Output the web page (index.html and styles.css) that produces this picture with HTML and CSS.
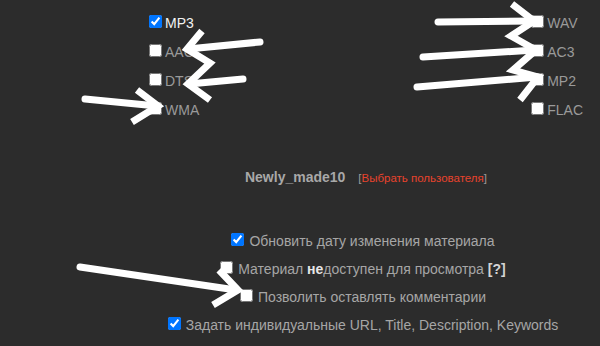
FILE: index.html
```html
<!DOCTYPE html>
<html lang="ru">
<head>
<meta charset="utf-8">
<title>Форматы</title>
<link rel="stylesheet" href="styles.css">
</head>
<body>
<div class="page">
  <div class="formats">
    <div class="col">
      <label class="fmt active"><input type="checkbox" checked>MP3</label>
      <label class="fmt"><input type="checkbox">AAC</label>
      <label class="fmt"><input type="checkbox">DTS</label>
      <label class="fmt"><input type="checkbox">WMA</label>
    </div>
    <div class="col">
      <label class="fmt"><input type="checkbox">WAV</label>
      <label class="fmt"><input type="checkbox">AC3</label>
      <label class="fmt"><input type="checkbox">MP2</label>
      <label class="fmt"><input type="checkbox">FLAC</label>
    </div>
  </div>

  <div class="user">
    <span class="name">Newly_made10</span>
    <span class="pick">[<a class="pick-link">Выбрать пользователя</a>]</span>
  </div>

  <div class="opts">
    <label class="opt"><input type="checkbox" checked>Обновить дату изменения материала</label>
    <label class="opt"><input type="checkbox">Материал <b class="hl">не</b>доступен для просмотра <b class="help">[?]</b></label>
    <label class="opt"><input type="checkbox">Позволить оставлять комментарии</label>
    <label class="opt"><input type="checkbox" checked>Задать индивидуальные URL, Title, Description, Keywords</label>
  </div>

  <svg class="arrows" width="600" height="346" viewBox="0 0 600 346" aria-hidden="true">
    <g fill="none" stroke="#ffffff" stroke-width="7">
      <path d="M260 42 L188 49" stroke-linecap="round"/>
      <path d="M202 31 L187 49 L210 63 L188 84 L210 100" stroke-linejoin="miter" stroke-miterlimit="10"/>
      <path d="M243 79 L189 84" stroke-linecap="round"/>
      <path d="M85 99 L157 106" stroke-linecap="round"/>
      <path d="M137 90 L158 106 L132 122"/>
      <path d="M438 22 L533 21" stroke-linecap="round"/>
      <path d="M512 4 L534 21 L511 36 L536 50 L513 70 L538 77 L520 100"/>
      <path d="M423 57 L535 50" stroke-linecap="round"/>
      <path d="M417 87 L537 77" stroke-linecap="round"/>
      <path d="M80 267 L236 290" stroke-linecap="round"/>
      <path d="M219 270 L238 290 L213 305"/>
    </g>
  </svg>
</div>
</body>
</html>
```

FILE: styles.css
```css
html, body {
  margin: 0;
  padding: 0;
  background: #2c2c2c;
  overflow: hidden;
}

.page {
  position: relative;
  width: 600px;
  height: 346px;
  padding: 9px 0 0 128px;
  box-sizing: border-box;
  font-family: "Liberation Sans", Arial, sans-serif;
  font-size: 14px;
  color: #a3a3a3;
}

.formats {
  width: 438px;
  margin: 0 auto;
  display: flex;
  justify-content: space-between;
}

.col {
  display: flex;
  flex-direction: column;
}

.fmt {
  display: block;
  height: 29px;
  line-height: 29px;
  color: #9a9a9a;
  white-space: nowrap;
}

.fmt.active {
  color: #f2f2f2;
}

.user {
  margin-top: 38px;
  height: 29px;
  line-height: 29px;
  text-align: center;
  white-space: nowrap;
  padding-left: 4px;
}

.name {
  font-weight: bold;
  color: #a8a8a8;
  margin-right: 9px;
}

.pick {
  font-size: 11.5px;
  color: #9a9a9a;
}

.pick-link {
  color: #e8432d;
}

.opts {
  margin-top: 35px;
  padding-right: 6px;
  display: flex;
  flex-direction: column;
  align-items: center;
}

.opt {
  display: block;
  height: 28px;
  line-height: 28px;
  white-space: nowrap;
  color: #a6a6a6;
}

.opt input {
  margin-right: 5px;
}

.hl {
  color: #e6e6e6;
}

.help {
  color: #d4d4d4;
}

.arrows {
  position: absolute;
  top: 0;
  left: 0;
  pointer-events: none;
}
```
